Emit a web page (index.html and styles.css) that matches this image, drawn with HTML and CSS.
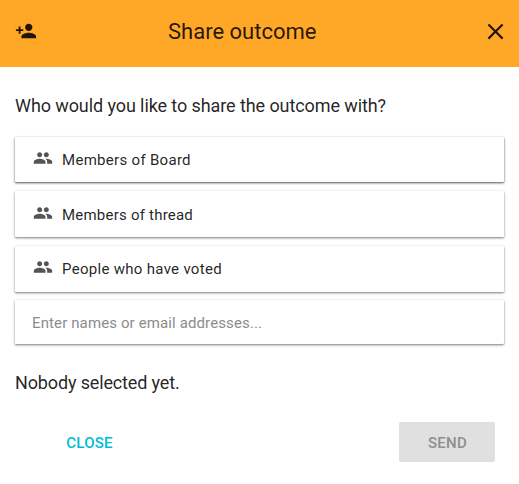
FILE: index.html
```
<!DOCTYPE html>
<html lang="en">
<head>
<meta charset="utf-8">
<title>Share outcome</title>
<link rel="stylesheet" href="styles.css">
</head>
<body>
<svg class="sprite" aria-hidden="true">
  <symbol id="people" viewBox="0 0 24 24"><path d="M16 11c1.66 0 2.99-1.34 2.99-3S17.66 5 16 5s-3 1.34-3 3 1.34 3 3 3zm-8 0c1.66 0 2.99-1.34 2.99-3S9.66 5 8 5 5 6.34 5 8s1.34 3 3 3zm0 2c-2.33 0-7 1.17-7 3.500V19h14v-2.500C15 14.170 10.330 13 8 13zm8 0c-.29 0-.62.02-.97.05 1.16.84 1.970 1.970 1.970 3.450V19h6v-2.500c0-2.330-4.670-3.500-7-3.500z"/></symbol>
</svg>
<header class="toolbar">
  <svg class="toolbar-icon" viewBox="0 0 24 24"><path d="M15 12c2.210 0 4-1.790 4-4s-1.790-4-4-4-4 1.790-4 4 1.790 4 4 4zm-9-2V7H4v3H1v2h3v3h2v-3h3v-2H6zm9 4c-2.670 0-8 1.340-8 4v2h16v-2c0-2.660-5.330-4-8-4z"/></svg>
  <h1 class="title">Share outcome</h1>
  <svg class="close-icon" viewBox="0 0 24 24"><path d="M19 6.410L17.590 5 12 10.590 6.410 5 5 6.410 10.590 12 5 17.590 6.410 19 12 13.410 17.590 19 19 17.590 13.410 12z"/></svg>
</header>
<main class="content">
  <p class="question">Who would you like to share the outcome with?</p>
  <div class="options">
    <div class="card option board"><svg class="people"><use href="#people"/></svg><span>Members of Board</span></div>
    <div class="card option thread"><svg class="people"><use href="#people"/></svg><span>Members of thread</span></div>
    <div class="card option voted"><svg class="people"><use href="#people"/></svg><span>People who have voted</span></div>
    <input class="card search" type="text" placeholder="Enter names or email addresses...">
  </div>
  <p class="status">Nobody selected yet.</p>
  <footer class="actions">
    <button class="button close">CLOSE</button>
    <button class="button send" disabled>SEND</button>
  </footer>
</main>
</body>
</html>
```
FILE: styles.css
```
* { box-sizing: border-box; }
body {
  margin: 0;
  background: #fff;
  color: rgba(0, 0, 0, .87);
  font-family: Roboto, sans-serif;
}
.sprite { display: none; }
svg { fill: currentColor; flex: none; }
.toolbar {
  height: 67px;
  padding: 0 10px 4px 15px;
  display: flex;
  align-items: center;
  background: #ffa827;
}
.toolbar-icon { width: 22px; height: 22px; margin-bottom: 2px; }
.title {
  flex: 1;
  margin: 0 0 0 131px;
  font-size: 22px;
  font-weight: 400;
  line-height: 28px;
}
.close-icon { width: 27px; height: 27px; }
.content { padding: 27px 15px 0; }
.question, .status {
  margin: 0;
  font-size: 18px;
  line-height: 24px;
  letter-spacing: -.09px;
}
.status { letter-spacing: -.14px; }
.options {
  margin-top: 19px;
  display: flex;
  flex-direction: column;
  gap: 9px;
}
.card {
  height: 46px;
  border-radius: 1px;
  background: #fff;
  box-shadow: 0 1px 3px rgba(0, 0, 0, .3), 0 1px 2px rgba(0, 0, 0, .28);
}
.option {
  padding-left: 18px;
  display: flex;
  align-items: center;
  gap: 9px;
  font-size: 15px;
  letter-spacing: .3px;
}
.board {
  height: 45px;
  box-shadow: 0 1px 3px rgba(0, 0, 0, .36), 0 1px 2px rgba(0, 0, 0, .42);
}
.thread { padding-top: 1px; letter-spacing: .22px; }
.people { width: 20px; height: 20px; margin-bottom: 3px; color: #545454; }
.voted .people { margin-bottom: 4px; }
.search {
  width: 100%;
  height: 44px;
  margin-top: -1px;
  padding: 1px 17px 0;
  border: 0;
  outline: 0;
  font: 15px Roboto, sans-serif;
  letter-spacing: .12px;
}
.search::placeholder { color: #8c8c8c; opacity: 1; }
.status { margin-top: 27px; }
.actions {
  margin-top: 27px;
  padding: 0 9px 0 26px;
  display: flex;
  justify-content: space-between;
}
.button {
  height: 40px;
  padding: 2px 0 0 1px;
  border: 0;
  border-radius: 2px;
  font: 500 15px Roboto, sans-serif;
  letter-spacing: .25px;
}
.close { width: 96px; background: none; color: #00bcd4; }
.send { width: 96px; background: #e0e0e0; color: #8f8f8f; }
```
